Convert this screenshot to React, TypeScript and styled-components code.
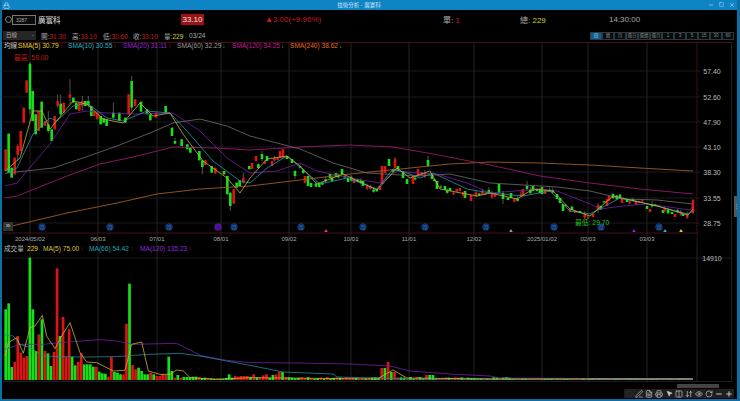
import styled, { createGlobalStyle } from 'styled-components';
import { Lock, Minus, Square, X, PenLine, FileText, Printer, MousePointer2, Columns2, ArrowDownUp, Eye, RotateCw, Plus } from 'lucide-react';

type Pt = [number, number];

const GlobalStyle = createGlobalStyle`
html, body { margin: 0; padding: 0; background: #000; }
body { font-family: "Liberation Sans", "Noto Sans CJK TC", sans-serif; }
`;

const Win = styled.div`
width: 740px;
height: 401px;
box-sizing: border-box;
background: #000;
border-left: 2px solid #0c6fa8;
border-right: 3px solid #0c6fa8;
border-bottom: 2px solid #0c6fa8;
display: flex;
flex-direction: column;
overflow: hidden;
`;
const TitleBar = styled.div`
height: 10px;
margin: 0 -3px 0 -2px;
padding: 0 3px;
background: #0f84c4;
color: #cfe6f4;
display: flex;
align-items: center;
justify-content: space-between;
font-size: 5.5px;
flex: none;
`;
const WinBtns = styled.div`
display: flex;
gap: 5px;
color: #d6ecf8;
padding-right: 2px;
`;
const QuoteRow = styled.div`
height: 17px;
display: flex;
align-items: center;
flex: none;
padding-top: 1px;
color: #ccc;
font-size: 8.5px;
`;
const Radio = styled.span`
width: 5px;
height: 5px;
border: 1px solid #888;
border-radius: 50%;
margin-left: 3px;
flex: none;
`;
const CodeInput = styled.div`
width: 24px;
height: 10px;
box-sizing: border-box;
border: 1px solid #777;
background: #0b0b0b;
color: #aaa;
font-size: 5px;
line-height: 8px;
padding-left: 3px;
flex: none;
`;
const StockName = styled.span`
margin-left: 2px;
width: 143px;
flex: none;
font-size: 7.5px;
font-weight: 500;
color: #c4c4c4;
`;
const PriceBox = styled.span`
width: 23px;
height: 11px;
background: #9c1216;
color: #e8e0e0;
font-size: 8px;
line-height: 11px;
text-align: center;
flex: none;
`;
const Change = styled.span`
margin-left: 61px;
width: 178px;
color: #c8181d;
font-size: 8px;
flex: none;
`;
const Stat = styled.span<{ $w: number }>`
width: ${p => p.$w}px;
flex: none;
font-size: 8px;
color: #aaa;
`;
const Val = styled.span<{ $c: string }>`
color: ${p => p.$c};
`;
const OhlcRow = styled.div`
height: 14px;
display: flex;
align-items: center;
flex: none;
font-size: 6.6px;
color: #aaa;
padding-top: 1px;
box-sizing: border-box;
`;
const Select = styled.div`
width: 33px;
height: 9px;
margin-left: 1px;
margin-right: 5px;
background: #262626;
color: #aaa;
font-size: 5.5px;
line-height: 9px;
padding-left: 3px;
box-sizing: border-box;
position: relative;
flex: none;
&::after {
  content: "";
  position: absolute;
  right: 2px;
  top: 4px;
  border: 1.5px solid transparent;
  border-top-color: #777;
}
`;
const Ohlc = styled.span<{ $w: number }>`
width: ${p => p.$w}px;
flex: none;
white-space: nowrap;
`;
const Tabs = styled.div`
margin-left: auto;
margin-right: 3px;
display: flex;
flex: none;
`;
const Tab = styled.span<{ $on?: boolean }>`
width: 12px;
height: 8px;
box-sizing: border-box;
border: 1px solid #2a3a42;
background: ${p => (p.$on ? '#0c5f90' : '#0a0a0a')};
color: ${p => (p.$on ? '#bfe0f2' : '#8a8a8a')};
font-size: 4.5px;
line-height: 6px;
text-align: center;
`;
const Pane = styled.div<{ $h: number }>`
position: relative;
height: ${p => p.$h}px;
flex: none;
`;
const ChartSvg = styled.svg`
display: block;
width: 735px;
height: 100%;
`;
const Legend = styled.div`
position: absolute;
left: 2px;
top: 0;
display: flex;
white-space: nowrap;
font-size: 6.6px;
line-height: 8px;
color: #bbb;
`;
const LegendItem = styled.span<{ $c: string; $w: number }>`
color: ${p => p.$c};
width: ${p => p.$w}px;
flex: none;
`;
const Arrow = styled.span<{ $up?: boolean }>`
color: ${p => (p.$up ? '#d01a1a' : '#18b818')};
margin-left: 1px;
`;
const Grip = styled.div`
position: absolute;
right: -2px;
top: 154px;
width: 5px;
height: 21px;
background: #555;
color: #ccc;
font-size: 5px;
line-height: 21px;
text-align: center;
`;
const FastBtn = styled.div`
position: absolute;
left: 1px;
top: 180px;
width: 10px;
height: 9px;
background: #333;
color: #ccc;
font-size: 8px;
line-height: 7px;
text-align: center;
`;
const Footer = styled.div`
flex: 1;
display: flex;
flex-direction: column;
align-items: flex-end;
padding-right: 3px;
`;
const HScroll = styled.div`
width: 42px;
height: 4px;
margin: 2px 15px 1px 0;
background: #444;
`;
const Tools = styled.div`
display: flex;
width: 110px;
height: 9px;
background: #1f1f1f;
`;
const Tool = styled.span<{ $dim?: boolean }>`
width: 10px;
flex: 1;
display: flex;
align-items: center;
justify-content: center;
color: ${p => (p.$dim ? '#333' : '#c8c8c8')};
`;

const RED = '#dc1414';
const GREEN = '#18e018';

const gridX = [30, 98, 157, 221, 289, 351, 409, 474, 542, 588, 647, 697];
const dates: [number, string][] = [
  [30, '2024/05/02'], [98, '06/03'], [157, '07/01'], [221, '08/01'], [289, '09/02'], [351, '10/01'],
  [409, '11/01'], [474, '12/02'], [542, '2025/01/02'], [588, '02/03'], [647, '03/03'],
];
const axis: [number, string][] = [
  [70, '57.40'], [96, '52.60'], [121, '47.90'], [146, '43.10'], [171, '38.30'], [197, '33.55'], [222, '28.75'],
];
const monthDots = [42, 110, 169, 234, 301, 363, 425, 486, 554, 601, 659];
const marks: [number, string][] = [[326, '#e0309a'], [511, '#999'], [634, '#9a20d8'], [665, '#20b8d8'], [681, '#e8d020']];

const sma240: Pt[] = [[12,225],[67,212],[117,202],[157,193],[200,188],[250,185],[300,179],[350,173],[410,167],[450,163],[490,161],[540,162],[590,164],[640,167],[693,170]];
const sma120: Pt[] = [[5,197],[17,195],[67,175],[100,163],[133,156],[173,146],[217,147],[250,149],[300,146],[350,144],[393,146],[433,153],[490,164],[540,175],[590,182],[640,188],[693,193]];
const sma60: Pt[] = [[7,172],[53,167],[83,157],[117,145],[150,132],[173,122],[200,118],[227,125],[250,135],[300,148],[333,162],[367,172],[417,175],[450,173],[490,182],[557,186],[590,190],[623,198],[657,199],[693,203]];
const sma20: Pt[] = [[5,185],[17,182],[33,163],[50,143],[70,113],[87,110],[107,112],[133,113],[173,112],[200,130],[227,157],[250,172],[277,170],[300,162],[317,170],[350,177],[380,182],[397,170],[417,172],[437,173],[467,182],[490,192],[540,188],[557,190],[590,203],[600,208],[623,205],[647,203],[690,209],[693,204]];
const sma10: Pt[] = [[5,173],[17,167],[33,133],[50,117],[57,120],[73,105],[87,102],[107,117],[123,120],[147,110],[170,112],[187,130],[213,160],[240,180],[250,182],[267,167],[287,155],[307,172],[320,183],[347,177],[377,188],[393,168],[410,173],[420,177],[433,172],[467,188],[490,192],[523,195],[550,190],[570,210],[590,213],[620,197],[657,205],[688,213],[693,210]];
const sma5: Pt[] = [[5,170],[20,157],[33,110],[42,110],[50,128],[73,100],[87,103],[103,118],[123,122],[140,102],[153,115],[170,112],[183,133],[203,160],[227,177],[240,192],[250,177],[267,158],[287,155],[300,165],[317,183],[343,173],[377,189],[397,167],[410,177],[430,170],[440,188],[477,195],[490,192],[517,198],[533,188],[553,190],[570,208],[590,215],[613,195],[657,205],[688,214],[693,208]];

// [x, top, bottom, colour, wickTop, wickBottom], read off the picture at 3x from (0,60)
const bigCandles: [number, number, number, string, number?, number?][] = [
  [17,265,330,'r'],[26,218,335,'g'],[35,320,350,'g'],[44,290,340,'r'],[53,255,282,'r',250,300],[62,210,270,'r'],[71,140,185,'r'],[80,58,95,'r'],
  [90,8,145,'g',4,160],[98,90,180,'g'],[107,160,220,'g'],[116,150,210,'r'],[125,122,200,'g'],[135,180,195,'r'],[145,190,210,'g',150,215],[155,205,240,'g'],[164,165,205,'r'],
  [173,120,135,'r',100,140],[182,128,160,'g',100,165],[191,125,155,'r'],[210,100,110,'r',55,130],[220,110,125,'g'],[229,125,145,'g'],[238,125,150,'r'],[247,120,135,'r',105,150],
  [256,120,135,'g'],[265,120,133,'g',105,140],[274,135,165,'g'],[283,150,165,'r'],[292,155,175,'r'],[302,165,190,'g'],[311,172,185,'g'],[320,175,195,'g'],[340,155,170,'g',125,175],
  [358,155,180,'g'],[376,170,185,'g'],[386,100,160,'r'],[395,60,140,'g',45,150],[405,115,135,'r'],[423,122,152,'g'],[441,145,160,'g'],[451,160,178,'g'],[468,155,170,'r'],[497,135,155,'g'],
  [516,200,225,'g'],[525,240,248,'g',230,250],[545,235,255,'g'],[562,250,265,'g'],[571,260,275,'g'],[598,270,298,'g'],[607,298,318,'g',298,340],[616,298,312,'r'],[635,315,335,'g'],[646,320,338,'r'],
  [672,330,340,'g'],[682,345,400,'g'],[691,395,435,'g',395,450],[701,385,428,'r'],[710,365,380,'g'],[719,358,375,'g'],[730,350,365,'r',335,368],[748,315,325,'g'],
];
// same idea further right, already in page pixels
const laterCandles: [number, number, number, string, number?, number?][] = [
  [252,162,168,'r'],[256,155,160,'r'],[262,153,158,'g',150,160],[267,155,160,'g'],[272,160,165,'r'],[280,150,157,'r'],[283,148,157,'r'],[287,155,158,'g'],[292,158,162,'g'],
  [305,175,182,'r'],[308,175,185,'g'],[311,182,186,'g'],[295,170,175,'g',169,178],[330,173,177,'g'],[336,172,176,'g'],[342,168,173,'g'],[348,177,181,'g'],[354,178,182,'r'],[363,180,185,'g'],
  [382,165,183,'r'],[385,165,172,'r'],[389,158,165,'g'],[395,158,167,'r',156,170],[398,165,170,'g'],[403,170,177,'g'],[407,178,183,'g'],[413,175,183,'r'],[418,168,175,'r'],[428,159,165,'g',155,166],
  [432,173,178,'g'],[437,180,188,'g'],[445,185,189,'g'],[450,187,190,'g'],[460,187,190,'r'],[465,190,197,'g'],[471,194,200,'r'],[499,183,192,'g'],[503,192,198,'g',190,203],[511,192,197,'g'],
  [523,188,195,'r'],[527,185,188,'g',180,190],[533,185,190,'g'],[542,186,193,'g'],[545,189,193,'r'],[557,193,198,'g'],[560,197,202,'g'],[563,203,210,'g'],[570,208,211,'r'],[580,210,212,'g'],[593,213,216,'r'],
  [598,204,209,'r',202,212],[607,198,205,'r'],[609,195,200,'r'],[613,193,197,'g',192,198],[622,198,202,'r'],[627,198,201,'g'],[647,205,208,'g'],[650,208,211,'r'],[663,209,212,'g'],[672,211,213,'g'],[675,213,216,'r'],[683,213,215,'g'],
];

const interp = (pts: Pt[], x: number) => {
  for (let i = 1; i < pts.length; i++) {
    if (x <= pts[i][0]) {
      const [x0, y0] = pts[i - 1];
      const [x1, y1] = pts[i];
      return y0 + ((y1 - y0) * (x - x0)) / (x1 - x0);
    }
  }
  return pts[pts.length - 1][1];
};
let seed = 7;
const rnd = () => {
  seed = (seed * 16807) % 2147483647;
  return seed / 2147483647;
};
const poly = (pts: Pt[]) => pts.map(p => p.join(',')).join(' ');

const candles = (() => {
  const out: { x: number; top: number; bot: number; up: boolean; wt: number; wb: number }[] = [];
  bigCandles.forEach(([zx, a, b, c, w1, w2]) => {
    out.push({ x: zx / 3, top: 60 + a / 3, bot: 60 + b / 3, up: c === 'r', wt: 60 + (w1 ?? a) / 3, wb: 60 + (w2 ?? b) / 3 });
  });
  laterCandles.forEach(([x, a, b, c, w1, w2]) => {
    out.push({ x, top: a, bot: b, up: c === 'r', wt: w1 ?? a, wb: w2 ?? b });
  });
  for (let x = 252; x < 690; x += 3.2) {
    const taken = laterCandles.some(c => Math.abs(c[0] - x) < 1.8);
    if (taken) continue;
    const y = interp(sma5, x) + (rnd() - 0.5) * 5;
    const h = 1 + rnd() * 3;
    const wig = rnd() * 3;
    out.push({ x, top: y - h / 2, bot: y + h / 2, up: rnd() > 0.6, wt: y - h / 2 - wig, wb: y + h / 2 + wig / 2 });
  }
  out.push({ x: 693, top: 199, bot: 212, up: true, wt: 198, wb: 213 });
  return out;
})();

// volume bars up to x=240: tops read at 3x from (0,235), baseline is 432 there
const volTops = '220g 202g 393g 378r 300r 350r 365r 360r 65g 220g 345g 295r 250g 345r 352g 390g 348r 97r 300g 243r 362r 280r 362g 388g 378r 352r 385g 385g 385g 392g 392r 407g 412g 413g 422r 363r 408g 410g 415g 415r 263r 143g 387r 400r 395g 405g 415g 415g 410r 415g 420r 420r 415r 417r 362g 405g 425r 417g 425r 423g 423g 423g 422g 422g 423r 426g 425g 426r 427g 428g 427r 428g 428g 426g 415g 425g 420r 422r 420r 420r 420r'
  .split(' ')
  .map(s => ({ top: 235 + parseInt(s) / 3, up: s.endsWith('r') }));
const volBars = (() => {
  const out = volTops.map((v, i) => ({ x: 5.7 + i * 3.02, top: v.top, up: v.up }));
  const last = out[out.length - 1].x;
  for (let x = last + 3.2; x < 690; x += 3.2) {
    let h = 1 + rnd() * (x < 285 ? 5 : x < 510 ? 2 : 0.6);
    if (x > 278 && x < 284) h = 8;
    if (x > 379 && x < 386) h = 12;
    if (x > 385 && x < 389) h = 18;
    if (x > 389 && x < 396) h = 8;
    if (x > 425 && x < 436) h = 5;
    out.push({ x, top: 379 - h, up: rnd() > 0.5 });
  }
  return out;
})();

const fromZoom = (pts: Pt[]): Pt[] => pts.map(([x, y]): Pt => [x / 3, 235 + y / 3]);
const vol5: Pt[] = [...fromZoom([[15,360],[25,320],[50,305],[70,352],[90,275],[105,270],[127,238],[140,300],[165,338],[185,300],[210,260],[240,350],[260,378],[290,380],[340,405],[375,403],[395,325],[425,318],[445,405],[480,415],[510,415],[530,402],[550,405],[570,425],[650,430],[750,425]]),
  [283,377],[377,378],[393,369],[407,377],[500,378],[693,378]];
const vol66: Pt[] = [...fromZoom([[15,297],[40,300],[60,325],[90,335],[130,360],[180,362],[250,363],[350,362],[400,358],[450,355],[540,352],[600,360],[680,375],[750,388]]),
  [283,371],[333,373],[337,376],[377,377],[417,378],[693,378]];
const vol120: Pt[] = [...fromZoom([[15,340],[60,325],[130,325],[200,318],[300,311],[350,315],[400,325],[530,322],[570,342],[600,358],[680,373],[750,380]]),
  [300,362],[350,363],[390,365],[410,370],[450,373],[490,375],[500,377],[693,378]];

const tabs = ['日', '週', '月', '還日', '還週', '還月', '1', '3', '5', '15', '30', '60'];

function PriceChart() {
  return (
    <ChartSvg viewBox="2 41 735 203" preserveAspectRatio="none">
      {axis.map(([y]) => <line key={y} x1={3} x2={700} y1={y} y2={y} stroke="#2b2326" strokeWidth={0.7} />)}
      {gridX.map((x, i) => <line key={x} x1={x} x2={x} y1={41} y2={244} stroke={i === 11 ? '#451520' : '#2c2c2c'} strokeWidth={0.8} />)}
      <line x1={2} x2={732} y1={41.5} y2={41.5} stroke="#5a1220" strokeWidth={0.8} />
      <line x1={2} x2={698} y1={232} y2={232} stroke="#5a1220" strokeWidth={0.8} />
      <line x1={731.5} x2={731.5} y1={41} y2={244} stroke="#2c2c2c" strokeWidth={0.8} />
      {candles.map((c, i) => (
        <g key={i}>
          <line x1={c.x} x2={c.x} y1={c.wt} y2={c.wb} stroke="#8a8a8a" strokeWidth={0.6} />
          <rect x={c.x - 1.3} y={c.top} width={2.6} height={Math.max(c.bot - c.top, 0.8)} fill={c.up ? RED : GREEN} />
        </g>
      ))}
      <polyline points={poly(sma240)} fill="none" stroke="#a05a22" strokeWidth={0.9} />
      <polyline points={poly(sma120)} fill="none" stroke="#941a6c" strokeWidth={0.9} />
      <polyline points={poly(sma60)} fill="none" stroke="#6e6e6e" strokeWidth={0.8} />
      <polyline points={poly(sma20)} fill="none" stroke="#7420a8" strokeWidth={0.8} />
      <polyline points={poly(sma10)} fill="none" stroke="#2498a8" strokeWidth={0.8} />
      <polyline points={poly(sma5)} fill="none" stroke="#c8b03c" strokeWidth={0.8} />
      {monthDots.map(x => (
        <g key={x}>
          <circle cx={x} cy={226} r={3.3} fill="#0a2458" stroke="#1858b0" strokeWidth={0.6} />
          <text x={x} y={227.8} fontSize={4.5} fill="#5c94d8" textAnchor="middle">月</text>
        </g>
      ))}
      <circle cx={218} cy={226} r={3.3} fill="#48108c" stroke="#7820c8" strokeWidth={0.6} />
      {marks.map(([x, c]) => <polygon key={x} points={`${x - 1.8},231 ${x + 1.8},231 ${x},228`} fill={c} />)}
      <text x={14} y={59} fontSize={6.8} fill="#c81818">最高: 59.00</text>
      <text x={575} y={224} fontSize={6.8} fill="#20c020">最低: 29.70</text>
      {axis.map(([y, t]) => <text key={t} x={712} y={y + 3} fontSize={7} fill="#bbb" textAnchor="middle">{t}</text>)}
      {dates.map(([x, t]) => <text key={t} x={x} y={240} fontSize={6} fill="#aaa" textAnchor="middle">{t}</text>)}
    </ChartSvg>
  );
}

function VolumeChart() {
  return (
    <ChartSvg viewBox="2 244 735 137" preserveAspectRatio="none">
      <line x1={3} x2={731} y1={257} y2={257} stroke="#262626" strokeWidth={0.7} />
      <line x1={3} x2={732} y1={380.5} y2={380.5} stroke="#2c2c2c" strokeWidth={0.7} />
      {gridX.map(x => <line key={x} x1={x} x2={x} y1={244} y2={381} stroke="#2c2c2c" strokeWidth={0.8} />)}
      <line x1={731.5} x2={731.5} y1={244} y2={381} stroke="#2c2c2c" strokeWidth={0.8} />
      {volBars.map((b, i) => <rect key={i} x={b.x - 1.35} y={b.top} width={2.7} height={379 - b.top} fill={b.up ? RED : GREEN} />)}
      <polyline points={poly([...vol120].sort((a, b) => a[0] - b[0]))} fill="none" stroke="#7420a8" strokeWidth={0.8} />
      <polyline points={poly([...vol66].sort((a, b) => a[0] - b[0]))} fill="none" stroke="#248898" strokeWidth={0.8} />
      <polyline points={poly([...vol5].sort((a, b) => a[0] - b[0]))} fill="none" stroke="#c8b03c" strokeWidth={0.8} />
      <line x1={590} x2={693} y1={378} y2={378} stroke="#8a948a" strokeWidth={0.9} />
      <text x={712} y={260} fontSize={7} fill="#bbb" textAnchor="middle">14910</text>
    </ChartSvg>
  );
}

export default function App() {
  return (
    <Win>
      <GlobalStyle />
      <TitleBar>
        <Lock size={7} color="#d6ecf8" />
        <span>技術分析 - 廣寰科</span>
        <WinBtns>
          <Minus size={6} />
          <Square size={5} />
          <X size={6} />
        </WinBtns>
      </TitleBar>
      <QuoteRow>
        <Radio />
        <CodeInput>3287</CodeInput>
        <StockName>廣寰科</StockName>
        <PriceBox>33.10</PriceBox>
        <Change>▲3.00(+9.96%)</Change>
        <Stat $w={77}>單: <Val $c="#d01818">1</Val></Stat>
        <Stat $w={89}>總: <Val $c="#d8d020">229</Val></Stat>
        <Stat $w={40}>14:30:00</Stat>
      </QuoteRow>
      <OhlcRow>
        <Select>日線</Select>
        <Ohlc $w={31}>開:<Val $c="#c81818">31.30</Val></Ohlc>
        <Ohlc $w={31}>高:<Val $c="#c81818">33.10</Val></Ohlc>
        <Ohlc $w={30}>低:<Val $c="#c81818">30.60</Val></Ohlc>
        <Ohlc $w={31}>收:<Val $c="#c81818">33.10</Val></Ohlc>
        <Ohlc $w={25}>量:<Val $c="#d8d020">229</Val></Ohlc>
        <Ohlc $w={24}>03/24</Ohlc>
        <Tabs>
          {tabs.map((t, i) => <Tab key={t} $on={i === 0}>{t}</Tab>)}
        </Tabs>
      </OhlcRow>
      <Pane $h={203}>
        <PriceChart />
        <Legend>
          <LegendItem $c="#ccc" $w={14}>均線:</LegendItem>
          <LegendItem $c="#e0d828" $w={50}>SMA(5) 30.79<Arrow $up>↑</Arrow></LegendItem>
          <LegendItem $c="#20b8c8" $w={55}>SMA(10) 30.55<Arrow $up>↑</Arrow></LegendItem>
          <LegendItem $c="#9028d8" $w={54}>SMA(20) 31.11<Arrow $up>↑</Arrow></LegendItem>
          <LegendItem $c="#999" $w={55}>SMA(60) 32.29<Arrow>↓</Arrow></LegendItem>
          <LegendItem $c="#c81898" $w={58}>SMA(120) 34.25<Arrow>↓</Arrow></LegendItem>
          <LegendItem $c="#e07020" $w={60}>SMA(240) 38.62<Arrow>↓</Arrow></LegendItem>
        </Legend>
        <FastBtn>»</FastBtn>
        <Grip>⋮</Grip>
      </Pane>
      <Pane $h={137}>
        <VolumeChart />
        <Legend>
          <LegendItem $c="#bbb" $w={23}>成交量</LegendItem>
          <LegendItem $c="#e0d828" $w={16}>229</LegendItem>
          <LegendItem $c="#d8c040" $w={46}>MA(5) 75.00<Arrow $up>↑</Arrow></LegendItem>
          <LegendItem $c="#20a8b8" $w={51}>MA(66) 54.42<Arrow $up>↑</Arrow></LegendItem>
          <LegendItem $c="#9028d8" $w={60}>MA(120) 135.23<Arrow $up>↑</Arrow></LegendItem>
        </Legend>
      </Pane>
      <Footer>
        <HScroll />
        <Tools>
          <Tool $dim><Square size={7} /></Tool>
          <Tool><PenLine size={8} /></Tool>
          <Tool><FileText size={8} /></Tool>
          <Tool><Printer size={8} /></Tool>
          <Tool><MousePointer2 size={7} fill="#c8c8c8" /></Tool>
          <Tool><Columns2 size={8} /></Tool>
          <Tool><ArrowDownUp size={8} /></Tool>
          <Tool><Eye size={8} /></Tool>
          <Tool><RotateCw size={8} /></Tool>
          <Tool><Minus size={8} strokeWidth={3} /></Tool>
          <Tool><Plus size={8} strokeWidth={3} /></Tool>
        </Tools>
      </Footer>
    </Win>
  );
}
